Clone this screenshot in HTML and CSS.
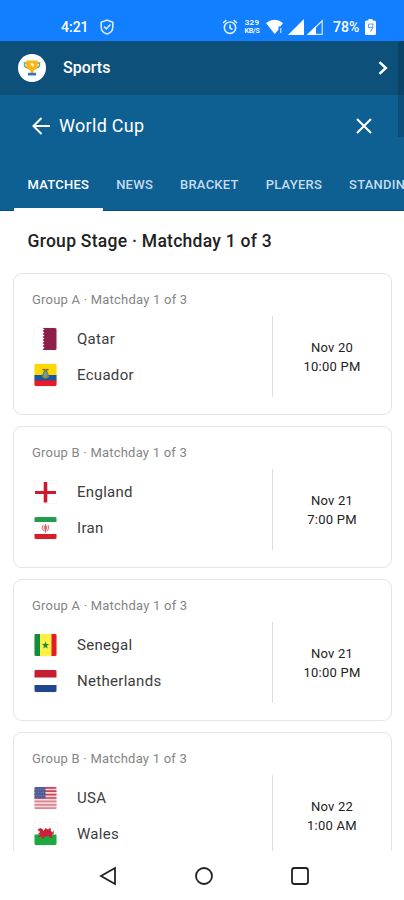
FILE: index.html
```html
<!DOCTYPE html>
<html lang="en">
<head>
    <meta charset="UTF-8">
    <meta name="viewport" content="width=device-width, initial-scale=1.0">
    <title>World Cup</title>
    <link rel="stylesheet" href="styles.css">
</head>
<body>
    <div class="status-bar">
        <span class="clock">4:21</span>
        <svg class="shield" width="14" height="16" viewBox="0 0 14 16" fill="none" stroke="#d5e8ff" stroke-width="1.6">
            <path d="M7 1 L12.800 3.200 V8 C12.800 11.500 10.500 14 7 15 C3.500 14 1.200 11.500 1.200 8 V3.200 Z"/>
            <path d="M4 7.500 L6.300 9.800 L10.500 5.500"/>
        </svg>
        <div class="status-icons">
            <svg class="alarm" width="16" height="16" viewBox="0 0 16 16" fill="none" stroke="#e0efff" stroke-width="1.600">
                <circle cx="8" cy="8.700" r="5.700"/>
                <path d="M1 4 L4.300 1.200 M15 4 L11.700 1.200 M8 5.500 V9 L10.500 10.500"/>
            </svg>
            <div class="net-speed"><span>329</span><span>KB/S</span></div>
            <svg class="wifi" width="18" height="16" viewBox="0 0 18 16" fill="#fff">
                <path d="M0 4 Q8.500 -2.500 17 4 L14.500 7.500 H12.500 V10.500 L8.700 15 Z"/>
                <path d="M14 9 H15.500 V14 H14 Z" fill="#9fcbff"/>
            </svg>
            <svg class="signal" width="16" height="16" viewBox="0 0 16 16" fill="#fff">
                <path d="M0 16 L16 0 V16 Z"/>
            </svg>
            <svg class="signal-half" width="16" height="16" viewBox="0 0 16 16">
                <path d="M1.500 15.300 L15.200 1.700 V15.300 Z" fill="none" stroke="#d5e8ff" stroke-width="1.200"/>
                <path d="M0 16 L9 7 V16 Z" fill="#fff"/>
            </svg>
            <span class="percent">78%</span>
            <svg class="battery" width="11" height="16" viewBox="0 0 11 16">
                <path d="M3.500 0 H7.500 V1.500 H9.500 Q11 1.500 11 3 V14.500 Q11 16 9.500 16 H1.500 Q0 16 0 14.500 V3 Q0 1.500 1.500 1.500 H3.500 Z" fill="#fff"/>
                <path d="M3.500 5 H7.800 V8.500 L5.500 12.500 M3.500 5 V8.500 H7" fill="none" stroke="#5da5fb" stroke-width="1.200"/>
            </svg>
        </div>
    </div>

    <div class="sports-bar">
        <span class="trophy">
            <svg width="18" height="18" viewBox="0 0 18 18">
                <path d="M4 4 H1.500 V5.500 Q1.500 8.500 5 9 M14 4 H16.500 V5.500 Q16.500 8.500 13 9" fill="none" stroke="#5fb27a" stroke-width="1.500"/>
                <path d="M3.300 1.500 H14.700 V6 Q14.200 10.500 10.600 11.500 V14 H7.400 V11.500 Q3.800 10.500 3.300 6 Z" fill="#fcb514"/>
                <path d="M7 4.500 L9.500 4 L11 5.500 L10.500 8 L8.500 6.500 Z" fill="#fff2c9"/>
                <path d="M5 13.800 H13 V16.500 H5 Z" fill="#3c6fd1"/>
            </svg>
        </span>
        <span class="sports-title">Sports</span>
        <svg class="chevron" width="10" height="14" viewBox="0 0 10 14" fill="none" stroke="#fff" stroke-width="2.500">
            <path d="M1.500 1.200 L7.800 7 L1.500 12.800"/>
        </svg>
    </div>

    <div class="league-header">
        <div class="title-row">
            <svg class="back" width="18" height="18" viewBox="0 0 18 18" fill="none" stroke="#fff" stroke-width="2">
                <path d="M18 9 H1.500 M9.500 1 L1.500 9 L9.500 17"/>
            </svg>
            <h1>World Cup</h1>
            <svg class="close" width="16" height="16" viewBox="0 0 16 16" fill="none" stroke="#fff" stroke-width="2.100">
                <path d="M1 1 L15 15 M15 1 L1 15"/>
            </svg>
        </div>
        <div class="tabs">
            <span class="tab active">MATCHES</span>
            <span class="tab">NEWS</span>
            <span class="tab">BRACKET</span>
            <span class="tab">PLAYERS</span>
            <span class="tab">STANDINGS</span>
        </div>
    </div>
    <div class="scrollbar"></div>

    <div class="content">
        <h2>Group Stage · Matchday 1 of 3</h2>

        <div class="match">
            <div class="group">Group A · Matchday 1 of 3</div>
            <div class="match-body">
                <div class="teams">
                    <div class="team">
                        <svg class="flag" viewBox="0 0 22 22">
                            <rect width="22" height="22" fill="#fff"/>
                            <path d="M22 0 H8 L10 1.500 L8 3 L10 4.500 L8 6 L10 7.500 L8 9 L10 10.500 L8 12 L10 13.500 L8 15 L10 16.500 L8 18 L10 19.500 L8 22 H22 Z" fill="#8d1f4a"/>
                        </svg>
                        <span>Qatar</span>
                    </div>
                    <div class="team">
                        <svg class="flag" viewBox="0 0 22 22">
                            <rect width="22" height="22" fill="#fbd900"/>
                            <rect y="11" width="22" height="6" fill="#1756a5"/>
                            <rect y="16.500" width="22" height="5.500" fill="#ed1827"/>
                            <ellipse cx="11" cy="10.500" rx="2.500" ry="3.500" fill="#63a4a1" stroke="#8a7130"/>
                            <path d="M7.500 6 Q9 4 11 5.500 Q13 4 14.500 6 L11 7 Z" fill="#7c6427"/>
                            <path d="M7.500 12 Q11 16 14.500 12" fill="none" stroke="#a08230" stroke-width="1.200"/>
                        </svg>
                        <span>Ecuador</span>
                    </div>
                </div>
                <div class="kickoff"><span>Nov 20</span><span>10:00 PM</span></div>
            </div>
        </div>

        <div class="match">
            <div class="group">Group B · Matchday 1 of 3</div>
            <div class="match-body">
                <div class="teams">
                    <div class="team">
                        <svg class="flag" viewBox="0 0 22 22">
                            <rect width="22" height="22" fill="#fff"/>
                            <path d="M9.200 1 H12.800 V10 H21.500 V13 H12.800 V21.500 H9.200 V13 H0.500 V10 H9.200 Z" fill="#d0182c"/>
                        </svg>
                        <span>England</span>
                    </div>
                    <div class="team">
                        <svg class="flag" viewBox="0 0 22 22">
                            <rect width="22" height="22" fill="#fff"/>
                            <rect width="22" height="5" fill="#239b50"/>
                            <rect y="17" width="22" height="5" fill="#d81d2a"/>
                            <path d="M11 7 V15.500 M8.700 8 Q6 12 10 14 M13.300 8 Q16 12 12 14 M9.800 9 V12.500 M12.200 9 V12.500" fill="none" stroke="#df5664" stroke-width="1"/>
                        </svg>
                        <span>Iran</span>
                    </div>
                </div>
                <div class="kickoff"><span>Nov 21</span><span>7:00 PM</span></div>
            </div>
        </div>

        <div class="match">
            <div class="group">Group A · Matchday 1 of 3</div>
            <div class="match-body">
                <div class="teams">
                    <div class="team">
                        <svg class="flag" viewBox="0 0 22 22">
                            <rect width="22" height="22" fill="#fff043"/>
                            <rect width="5.500" height="22" fill="#128b43"/>
                            <rect x="17" width="5" height="22" fill="#e01e2b"/>
                            <path d="M11 7.500 L12 10 H14.500 L12.500 11.800 L13.200 14.500 L11 12.900 L8.800 14.500 L9.500 11.800 L7.500 10 H10 Z" fill="#178a3f"/>
                        </svg>
                        <span>Senegal</span>
                    </div>
                    <div class="team">
                        <svg class="flag" viewBox="0 0 22 22">
                            <rect width="22" height="22" fill="#fff"/>
                            <rect width="22" height="7.500" fill="#c41e31"/>
                            <rect y="15" width="22" height="7" fill="#21468f"/>
                        </svg>
                        <span>Netherlands</span>
                    </div>
                </div>
                <div class="kickoff"><span>Nov 21</span><span>10:00 PM</span></div>
            </div>
        </div>

        <div class="match">
            <div class="group">Group B · Matchday 1 of 3</div>
            <div class="match-body">
                <div class="teams">
                    <div class="team">
                        <svg class="flag" viewBox="0 0 22 22">
                            <rect width="22" height="22" fill="#f5d9dc"/>
                            <path d="M0 .8 H22 M0 4.200 H22 M0 7.600 H22 M0 11 H22" stroke="#cf4354" stroke-width="1.700"/>
                            <path d="M0 14.400 H22 M0 17.800 H22 M0 21.200 H22" stroke="#d98792" stroke-width="1.700"/>
                            <rect width="11" height="11.500" fill="#525d96"/>
                            <path d="M1 2.500 H10 M1 5.500 H10 M1 8.500 H10" stroke="#737eae" stroke-width="1" stroke-dasharray="1 1.500"/>
                        </svg>
                        <span>USA</span>
                    </div>
                    <div class="team">
                        <svg class="flag" viewBox="0 0 22 22">
                            <rect width="22" height="22" fill="#fff"/>
                            <rect y="11.500" width="22" height="10.500" fill="#1aaa40"/>
                            <path d="M3 6.500 L6 5 L8.500 6.500 L9 8 L11 5 L13.500 6.500 L16 4.500 L16.500 8 L18 9.500 L19.500 7 L19 11 L17 12 L18 15 H15.500 L14.500 13 L10.500 13.500 L9.500 15.500 H7 L8 13 L4.500 14.500 L3.500 13.500 L6 11.500 L3 11.500 L5.500 9 Z" fill="#cb2239"/>
                        </svg>
                        <span>Wales</span>
                    </div>
                </div>
                <div class="kickoff"><span>Nov 22</span><span>1:00 AM</span></div>
            </div>
        </div>
    </div>

    <div class="nav-bar">
        <svg width="20" height="20" viewBox="0 0 20 20"><path d="M17 2 V18 L3 10 Z"/></svg>
        <svg width="20" height="20" viewBox="0 0 20 20"><circle cx="10" cy="10" r="8"/></svg>
        <svg width="20" height="20" viewBox="0 0 20 20"><rect x="2" y="2" width="16" height="16" rx="2.500"/></svg>
    </div>
</body>
</html>
```
FILE: styles.css
```css
:root {
    --status-blue: #117fff;
    --dark-blue: #0d5079;
    --blue: #0e5f92;
    --border: #e4e4e4;
    --text: #3c3c3c;
    --font: Roboto, "Liberation Sans", sans-serif;
}

* {
    box-sizing: border-box;
    margin: 0;
    padding: 0;
}

body {
    display: flex;
    flex-direction: column;
    width: 404px;
    height: 900px;
    overflow: hidden;
    background: #fff;
    color: var(--text);
    font-family: var(--font);
    position: relative;
}

svg {
    display: block;
    flex-shrink: 0;
}

.status-bar {
    display: flex;
    align-items: center;
    height: 41px;
    padding: 12px 28px 0 61px;
    background: var(--status-blue);
    color: #fff;
    flex-shrink: 0;
}

.clock {
    width: 39px;
    font-size: 14px;
    font-weight: 500;
}

.status-icons {
    display: flex;
    align-items: center;
    margin-left: auto;
}

.net-speed {
    display: flex;
    flex-direction: column;
    align-items: center;
    width: 16px;
    margin: 0 6px;
    font-size: 8px;
    font-weight: 600;
    line-height: 8px;
}

.net-speed span:first-child {
    letter-spacing: 0.3px;
}

.net-speed span:last-child {
    font-size: 7px;
    letter-spacing: -0.2px;
}

.signal {
    margin: 0 3px 0 4px;
}

.percent {
    width: 28px;
    margin: 0 4px 0 10px;
    font-size: 14px;
    font-weight: 500;
    letter-spacing: 0;
}

.sports-bar {
    display: flex;
    align-items: center;
    height: 54px;
    padding: 0 16px 0 18px;
    background: var(--dark-blue);
    color: #fff;
    flex-shrink: 0;
}

.trophy {
    display: flex;
    align-items: center;
    justify-content: center;
    width: 28px;
    height: 28px;
    margin-right: 17px;
    border-radius: 50%;
    background: #fff;
}

.sports-title {
    padding-bottom: 1px;
    font-size: 16px;
    font-weight: 500;
}

.chevron {
    margin-left: auto;
}

.league-header {
    height: 116px;
    background: var(--blue);
    border-bottom: 1px solid #084a82;
    flex-shrink: 0;
}

.title-row {
    display: flex;
    align-items: center;
    height: 62px;
    padding: 0 32px;
    color: #fff;
}

.title-row h1 {
    margin-left: 9px;
    padding-bottom: 1px;
    font-size: 18px;
    font-weight: 400;
    letter-spacing: 0.3px;
}

.close {
    margin-left: auto;
}

.tabs {
    display: flex;
    height: 54px;
    padding-left: 14px;
    overflow: hidden;
}

.tab {
    height: 54px;
    padding: 0 13.5px;
    color: #c4dcef;
    font-size: 13px;
    font-weight: 500;
    letter-spacing: 0.24px;
    line-height: 55px;
    white-space: nowrap;
}

.tab.active {
    color: #fff;
    border-bottom: 3px solid #fff;
}

.scrollbar {
    position: absolute;
    top: 41px;
    right: 0;
    width: 6px;
    height: 96px;
    background: rgba(0, 30, 55, 0.25);
}

.content {
    flex: 1;
    min-height: 0;
    overflow: hidden;
    padding: 0 12px 0 13px;
}

.content h2 {
    padding-left: 14.5px;
    height: 62px;
    color: #222;
    font-size: 17.5px;
    font-weight: 500;
    letter-spacing: 0.27px;
    line-height: 60px;
}

.match {
    height: 142px;
    margin-bottom: 11px;
    padding: 17px 0 0 18px;
    border: 1px solid var(--border);
    border-radius: 9px;
}

.group {
    height: 18px;
    color: #858585;
    font-size: 13px;
    letter-spacing: 0.22px;
    line-height: 18px;
}

.match-body {
    display: flex;
    margin-top: 7px;
}

.teams {
    display: flex;
    flex-direction: column;
    gap: 14px;
    width: 241px;
    height: 81px;
    padding: 12px 0 0 2px;
    border-right: 1px solid #dcdcdc;
}

.team {
    display: flex;
    align-items: center;
    height: 22px;
    font-size: 15px;
    letter-spacing: 0.3px;
}

.flag {
    width: 23px;
    height: 22px;
    margin-right: 20px;
    border-radius: 2px;
    box-shadow: 0 0 1px #aaa;
}

.kickoff {
    display: flex;
    flex: 1;
    flex-direction: column;
    justify-content: center;
    text-align: center;
    color: #222;
    font-size: 13px;
    letter-spacing: 0.25px;
    line-height: 19px;
}

.nav-bar {
    display: flex;
    align-items: center;
    gap: 76px;
    height: 49px;
    padding-left: 98px;
    background: #fff;
    flex-shrink: 0;
}

.nav-bar svg {
    fill: none;
    stroke: #222;
    stroke-width: 1.8;
}
```
